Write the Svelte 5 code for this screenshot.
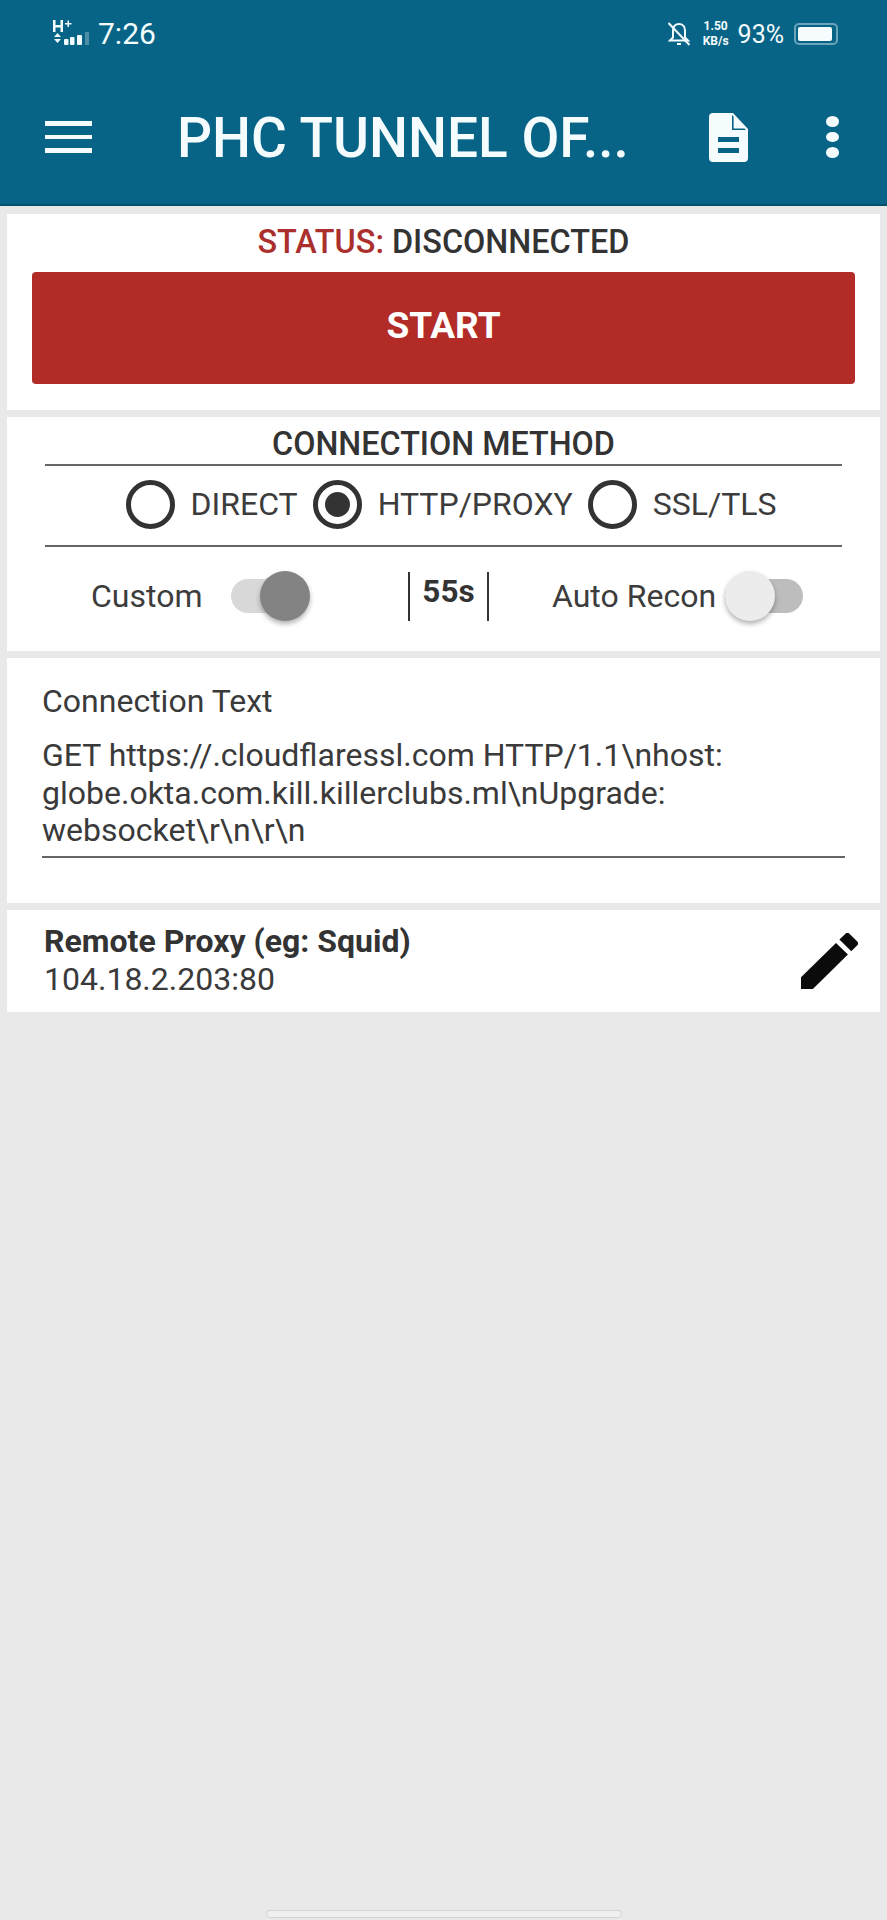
<script lang="ts">
	const methods = [
		{ label: 'DIRECT', checked: false },
		{ label: 'HTTP/PROXY', checked: true },
		{ label: 'SSL/TLS', checked: false },
	];
</script>

<div class="screen">
	<header class="appbar">
		<div class="statusbar">
			<div class="status-left">
				<svg class="signal" viewBox="0 0 44 28" width="44" height="28" aria-hidden="true">
					<g fill="#f2fbfd">
						<path d="M1 0h2.500v5h5V0H11v12H8.500V7.500h-5V12H1z" />
						<path d="M13 3h2.500V.500H17V3h2.500v1.500H17V7h-1.500V4.500H13z" />
						<path d="M5.500 13l3.500 4H2zM2 19h7l-3.500 4z" />
						<rect x="12" y="19" width="4.500" height="6" rx="1" />
						<rect x="18" y="17" width="4.500" height="8" rx="1" />
						<rect x="25" y="15" width="5" height="10" rx="1" />
					</g>
					<rect x="33" y="12" width="4" height="13" fill="#4c8ea8" />
				</svg>
				<span class="time">7:26</span>
			</div>
			<div class="status-right">
				<svg class="bell" viewBox="0 0 24 26" width="24" height="26" fill="none" stroke="#f2fbfd" stroke-width="2" aria-hidden="true">
					<path d="M6 9.500c0-4 2.500-6.500 6-6.500s6 2.500 6 6.500v7l3 3H3l3-3z" />
					<path d="M10 23h4M1.500 2l21 22" />
				</svg>
				<div class="speed"><b>1.50</b><b>KB/s</b></div>
				<span class="percent">93%</span>
				<div class="battery"><i></i></div>
			</div>
		</div>
		<div class="toolbar">
			<div class="menu"><span></span><span></span><span></span></div>
			<h1>PHC TUNNEL OF...</h1>
			<svg class="doc" viewBox="0 0 39 49" width="39" height="49" aria-hidden="true">
				<path fill="#f4fcfd" fill-rule="evenodd" d="M4 0h20l15 16v29a4 4 0 0 1-4 4H4a4 4 0 0 1-4-4V4a4 4 0 0 1 4-4zM9 24v5h21v-5zM9 35v5h21v-5z" />
				<path fill="#076487" d="M23 2v15h14l-1.500-1.600H24.600V3.700z" />
			</svg>
			<div class="dots"><span></span><span></span><span></span></div>
		</div>
	</header>

	<main class="content">
		<section class="card status-card">
			<p class="status"><span class="status-key">STATUS:</span> DISCONNECTED</p>
			<button type="button" class="start">START</button>
		</section>

		<section class="card method-card">
			<h2>CONNECTION METHOD</h2>
			<div class="radios">
				{#each methods as method}
					<div class="radio-item">
						<span class="radio" class:checked={method.checked}></span>
						<span>{method.label}</span>
					</div>
				{/each}
			</div>
			<div class="options">
				<div class="option custom">
					<span>Custom</span>
					<span class="switch on"><i></i></span>
				</div>
				<div class="timer">55s</div>
				<div class="option recon">
					<span>Auto Recon</span>
					<span class="switch off"><i></i></span>
				</div>
			</div>
		</section>

		<section class="card text-card">
			<div class="field-label">Connection Text</div>
			<div class="field-value">GET https://.cloudflaressl.com HTTP/1.1\nhost:<br />globe.okta.com.kill.killerclubs.ml\nUpgrade:<br />websocket\r\n\r\n</div>
		</section>

		<section class="card proxy-card">
			<div>
				<div class="proxy-title">Remote Proxy (eg: Squid)</div>
				<div class="proxy-value">104.18.2.203:80</div>
			</div>
			<svg class="edit" viewBox="3 3 18 18" width="57" height="56" preserveAspectRatio="none" aria-hidden="true">
				<path fill="#0b0b0b" d="M3 17.250V21h3.750L17.810 9.940l-3.750-3.750L3 17.250zM20.710 7.040a1 1 0 0 0 0-1.410l-2.340-2.340a1 1 0 0 0-1.410 0l-1.830 1.830 3.750 3.750 1.830-1.830z" />
			</svg>
		</section>
	</main>

	<div class="gesture"></div>
</div>

<style>
	:global(body) {
		margin: 0;
		background: #e9e9e9;
	}

	.screen {
		display: flex;
		flex-direction: column;
		height: 1920px;
		overflow: hidden;
		background: #e9e9e9;
		font-family: Roboto, 'Liberation Sans', sans-serif;
		color: #333;
	}

	.appbar {
		flex: none;
		height: 206px;
		box-sizing: border-box;
		background: #076487;
		border-bottom: 2px solid #05506c;
		color: #f4fcfd;
	}

	.statusbar {
		display: flex;
		justify-content: space-between;
		align-items: center;
		height: 68px;
		padding: 0 49px 0 52px;
	}

	.status-left,
	.status-right {
		display: flex;
		align-items: center;
	}

	.signal {
		margin-right: 2px;
	}

	.time {
		font-size: 30px;
		line-height: 34px;
	}

	.bell {
		margin-right: 12px;
	}

	.speed {
		display: flex;
		flex-direction: column;
		align-items: center;
		margin-right: 9px;
	}

	.speed b {
		font-size: 12px;
		line-height: 15px;
		font-weight: 700;
	}

	.percent {
		font-size: 25px;
		margin-right: 10px;
	}

	.battery {
		box-sizing: border-box;
		width: 44px;
		height: 22px;
		padding: 2px;
		border: 2px solid #6ba4bb;
		border-radius: 5px;
	}

	.battery i {
		display: block;
		width: 34px;
		height: 14px;
		border-radius: 2px;
		background: #f7fdfe;
	}

	.toolbar {
		display: flex;
		align-items: center;
		height: 136px;
		padding: 2px 48px 0 45px;
		box-sizing: border-box;
	}

	.menu {
		display: grid;
		gap: 9px;
		width: 47px;
	}

	.menu span {
		height: 4.500px;
		background: #f4fcfd;
	}

	h1 {
		flex: 1;
		margin: 2px 0 0 85px;
		font-size: 55px;
		font-weight: 500;
		line-height: 60px;
		white-space: nowrap;
	}

	.doc {
		margin-right: 78px;
	}

	.dots {
		display: grid;
		gap: 5px;
		width: 13px;
	}

	.dots span {
		width: 13px;
		height: 10.500px;
		border-radius: 50%;
		background: #f4fcfd;
	}

	.content {
		flex: 1;
		display: flex;
		flex-direction: column;
		gap: 7px;
		padding: 8px 7px 0;
	}

	.card {
		background: #fff;
		box-sizing: border-box;
	}

	.status-card {
		height: 196px;
		padding: 9px 25px 0;
	}

	.status {
		margin: 0 0 10px;
		text-align: center;
		font-size: 32.400px;
		line-height: 39px;
		font-weight: 500;
		color: #333;
	}

	.status-key {
		color: #ab302d;
	}

	.start {
		display: block;
		width: 100%;
		height: 112px;
		padding: 0 0 6px;
		border: 0;
		border-radius: 4px;
		background: #b32b26;
		color: #fff;
		font: 700 37px Roboto, 'Liberation Sans', sans-serif;
	}

	.method-card {
		height: 234px;
		padding: 8px 38px 0;
	}

	h2 {
		margin: 0;
		height: 39px;
		border-bottom: 2px solid #666;
		text-align: center;
		font-size: 32.300px;
		line-height: 39px;
		font-weight: 500;
	}

	.radios {
		display: flex;
		justify-content: center;
		gap: 15px;
		height: 76px;
		padding: 0 0 3px 15px;
		align-items: center;
		border-bottom: 2px solid #666;
		font-size: 32px;
		color: #3c3c3c;
	}

	.radio-item {
		display: flex;
		align-items: center;
		gap: 16px;
	}

	.radio {
		position: relative;
		box-sizing: border-box;
		width: 49px;
		height: 49px;
		border: 5px solid #333;
		border-radius: 50%;
	}

	.radio.checked::after {
		content: '';
		position: absolute;
		inset: 7px;
		border-radius: 50%;
		background: #333;
	}

	.options {
		display: flex;
		align-items: center;
		height: 98px;
		padding-bottom: 2px;
		font-size: 32px;
		color: #3c3c3c;
	}

	.option {
		display: flex;
		align-items: center;
	}

	.custom {
		padding-left: 46px;
		gap: 28px;
		width: 363px;
		box-sizing: border-box;
	}

	.timer {
		box-sizing: border-box;
		width: 81px;
		height: 49px;
		border-left: 2px solid #333;
		border-right: 2px solid #333;
		text-align: center;
		font-size: 31.500px;
		font-weight: 700;
		line-height: 40px;
		color: #333;
	}

	.recon {
		margin-left: 63px;
		gap: 9px;
	}

	.switch {
		position: relative;
		display: block;
		width: 64px;
		height: 34px;
		border-radius: 17px;
	}

	.switch i {
		position: absolute;
		top: -8px;
		width: 50px;
		height: 50px;
		border-radius: 50%;
		box-shadow: 0 3px 5px rgba(0, 0, 0, 0.3);
	}

	.switch.on {
		margin-left: 1px;
		background: #d8d8d8;
	}

	.switch.on i {
		right: -15px;
		background: #838383;
	}

	.switch.off {
		background: #bdbdbd;
		width: 78px;
	}

	.switch.off i {
		left: 0;
		background: #ececec;
	}

	.text-card {
		height: 245px;
		padding: 25px 35px 0;
	}

	.field-label {
		font-size: 32px;
		line-height: 36px;
		margin-bottom: 18px;
		color: #3a3a3a;
	}

	.field-value {
		font-size: 32px;
		line-height: 37.500px;
		height: 121px;
		box-sizing: border-box;
		border-bottom: 2px solid #666;
		white-space: nowrap;
		color: #3a3a3a;
	}

	.proxy-card {
		display: flex;
		justify-content: space-between;
		align-items: center;
		height: 102px;
		padding: 0 22px 0 37px;
		font-size: 32px;
	}

	.proxy-card > div {
		margin-bottom: 2px;
	}

	.proxy-title {
		font-weight: 700;
		line-height: 38px;
		color: #333;
	}

	.proxy-value {
		line-height: 38px;
		color: #3a3a3a;
	}

	.gesture {
		flex: none;
		align-self: center;
		width: 354px;
		height: 6px;
		margin-bottom: 2px;
		border: 1px solid #d4d4d4;
		border-radius: 4px;
		background: #efefef;
	}
</style>
